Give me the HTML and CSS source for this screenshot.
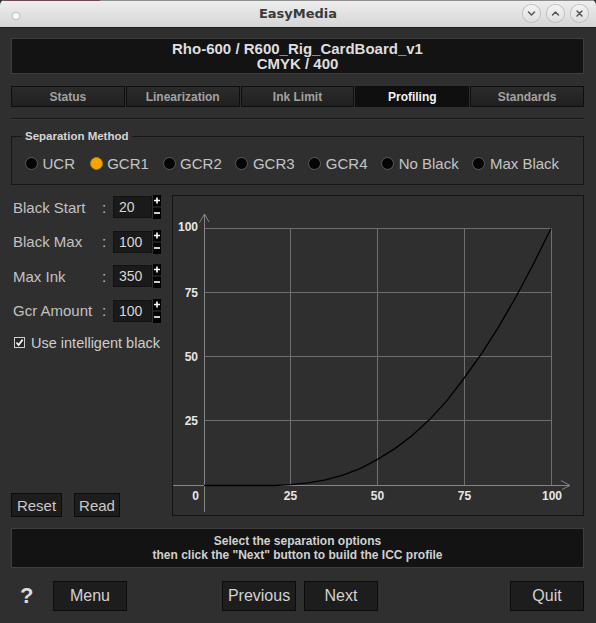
FILE: index.html
```html
<!DOCTYPE html>
<html>
<head>
<meta charset="utf-8">
<title>EasyMedia</title>
<link rel="stylesheet" href="styles.css">
</head>
<body>
<div class="window">
  <div class="titlebar">
    <div class="tb-left"><span class="tb-dot"></span></div>
    <div class="tb-title">EasyMedia</div>
    <div class="tb-buttons">
      <span class="tb-btn"><svg width="17" height="17" viewBox="0 0 17 17"><path d="M5.5 7 L8.5 10 L11.5 7" fill="none" stroke="#555" stroke-width="1.5" stroke-linecap="round" stroke-linejoin="round"/></svg></span>
      <span class="tb-btn"><svg width="17" height="17" viewBox="0 0 17 17"><path d="M5.5 10 L8.5 7 L11.5 10" fill="none" stroke="#555" stroke-width="1.5" stroke-linecap="round" stroke-linejoin="round"/></svg></span>
      <span class="tb-btn"><svg width="17" height="17" viewBox="0 0 17 17"><path d="M6 6 L11 11 M11 6 L6 11" fill="none" stroke="#555" stroke-width="1.5" stroke-linecap="round"/></svg></span>
    </div>
  </div>

  <div class="content">
    <div class="header">
      <div>Rho-600 / R600_Rig_CardBoard_v1</div>
      <div>CMYK / 400</div>
    </div>

    <div class="tabs">
      <div class="tab">Status</div>
      <div class="tab">Linearization</div>
      <div class="tab">Ink Limit</div>
      <div class="tab active">Profiling</div>
      <div class="tab">Standards</div>
    </div>

    <div class="rule"></div>

    <fieldset class="group">
      <legend>Separation Method</legend>
      <div class="radios">
        <div class="radio first"><span class="dot"></span>UCR</div>
        <div class="radio"><span class="dot on"></span>GCR1</div>
        <div class="radio"><span class="dot"></span>GCR2</div>
        <div class="radio"><span class="dot"></span>GCR3</div>
        <div class="radio"><span class="dot"></span>GCR4</div>
        <div class="radio"><span class="dot"></span>No Black</div>
        <div class="radio"><span class="dot"></span>Max Black</div>
      </div>
    </fieldset>

    <div class="work">
      <div class="params">
        <div class="field">
          <span class="label">Black Start</span><span class="colon">:</span>
          <span class="input">20</span>
          <svg class="spin" width="8" height="24" viewBox="0 0 8 24"><rect width="8" height="24" fill="#000"/><rect y="11.5" width="8" height="1" fill="#3a3a3a"/><path d="M1 5.5 H7 M4 2.5 V8.5" stroke="#fff" stroke-width="1.6"/><path d="M1 18 H7" stroke="#fff" stroke-width="1.6"/></svg>
        </div>
        <div class="field">
          <span class="label">Black Max</span><span class="colon">:</span>
          <span class="input">100</span>
          <svg class="spin" width="8" height="24" viewBox="0 0 8 24"><rect width="8" height="24" fill="#000"/><rect y="11.5" width="8" height="1" fill="#3a3a3a"/><path d="M1 5.5 H7 M4 2.5 V8.5" stroke="#fff" stroke-width="1.6"/><path d="M1 18 H7" stroke="#fff" stroke-width="1.6"/></svg>
        </div>
        <div class="field">
          <span class="label">Max Ink</span><span class="colon">:</span>
          <span class="input">350</span>
          <svg class="spin" width="8" height="24" viewBox="0 0 8 24"><rect width="8" height="24" fill="#000"/><rect y="11.5" width="8" height="1" fill="#3a3a3a"/><path d="M1 5.5 H7 M4 2.5 V8.5" stroke="#fff" stroke-width="1.6"/><path d="M1 18 H7" stroke="#fff" stroke-width="1.6"/></svg>
        </div>
        <div class="field">
          <span class="label">Gcr Amount</span><span class="colon">:</span>
          <span class="input">100</span>
          <svg class="spin" width="8" height="24" viewBox="0 0 8 24"><rect width="8" height="24" fill="#000"/><rect y="11.5" width="8" height="1" fill="#3a3a3a"/><path d="M1 5.5 H7 M4 2.5 V8.5" stroke="#fff" stroke-width="1.6"/><path d="M1 18 H7" stroke="#fff" stroke-width="1.6"/></svg>
        </div>
        <div class="check">
          <svg class="box" width="11" height="11" viewBox="0 0 11 11"><rect x="0.5" y="0.5" width="10" height="10" fill="#262626" stroke="#cfcfcf"/><path d="M2.5 5.5 L4.6 8 L8.6 2.6" fill="none" stroke="#f0f0f0" stroke-width="1.8"/></svg>
          <span>Use intelligent black</span>
        </div>
        <div class="actions">
          <button class="btn reset">Reset</button>
          <button class="btn read">Read</button>
        </div>
      </div>

      <div class="chart">
        <svg width="410" height="319" viewBox="173 197 410 319">
          <g stroke="#6f6f6f" stroke-width="1" shape-rendering="crispEdges" fill="none">
            <path d="M204 229.5 H551.5 M204 293.5 H551.5 M204 357.5 H551.5 M204 421.5 H551.5"/>
            <path d="M290.5 229 V486 M377.5 229 V486 M464.5 229 V486 M551.5 229 V486"/>
          </g>
          <g stroke="#858585" stroke-width="1" fill="none">
            <path d="M204.5 216 V513" shape-rendering="crispEdges"/>
            <path d="M173 486.5 H569" shape-rendering="crispEdges"/>
            <path d="M199.5 223.5 L204.5 215 L209 223"/>
            <path d="M561 481.5 L570 486.5 L562 490.5"/>
          </g>
          <polyline fill="none" stroke="#000" stroke-width="1.3" points="204,486.5 273.4,486.5 290.75,485.6 308.1,483.9 325.45,480.9 342.8,476.2 360.15,469.6 377.5,460.4 394.85,449.6 412.2,436.4 429.55,420.6 446.9,401.6 464.25,379 481.6,354.6 498.95,327.4 516.3,297.2 533.65,264.5 551,229.5"/>
          <g class="axis-label" text-anchor="end">
            <text x="198" y="232">100</text>
            <text x="198" y="297.5">75</text>
            <text x="198" y="361.5">50</text>
            <text x="198" y="426">25</text>
          </g>
          <g class="axis-label" text-anchor="middle">
            <text x="195.5" y="501">0</text>
            <text x="290.5" y="501">25</text>
            <text x="377.5" y="501">50</text>
            <text x="464.5" y="501">75</text>
            <text x="552" y="501">100</text>
          </g>
        </svg>
      </div>
    </div>

    <div class="message">
      <div>Select the separation options</div>
      <div>then click the "Next" button to build the ICC profile</div>
    </div>

    <div class="footer">
      <span class="help">?</span>
      <button class="btn big menu">Menu</button>
      <button class="btn big prev">Previous</button>
      <button class="btn big next">Next</button>
      <button class="btn big quit">Quit</button>
    </div>
  </div>
</div>
</body>
</html>
```

FILE: styles.css
```css
* { box-sizing: border-box; }
html, body { margin: 0; padding: 0; }
body {
  width: 596px;
  height: 623px;
  overflow: hidden;
  background: #2f2f2f;
  font-family: "Liberation Sans", Arial, sans-serif;
  color: #c8c8c8;
}
.window {
  width: 596px;
  height: 623px;
  display: flex;
  flex-direction: column;
  background: #2f2f2f;
}

/* title bar */
.titlebar {
  flex: none;
  height: 28px;
  display: grid;
  grid-template-columns: 1fr auto 1fr;
  align-items: center;
  background:
    linear-gradient(90deg, #6a4658 0 100px, #8e8e8e 100px) top / 100% 1px no-repeat,
    linear-gradient(#efefef, #d5d5d5);
  border-bottom: 1px solid #1c1c1c;
  border-radius: 5px 5px 0 0;
}
.tb-left { display: flex; align-items: center; }
.tb-dot {
  width: 6px;
  height: 6px;
  margin: 4px 0 0 13px;
  border-radius: 50%;
  background: #f8f8f8;
  box-shadow: 0 0 1px 1px #c4c4c4;
}
.tb-title {
  font-family: "DejaVu Sans", sans-serif;
  font-weight: bold;
  font-size: 13px;
  color: #3a3a3a;
}
.tb-buttons {
  justify-self: end;
  display: flex;
  gap: 7px;
  margin-right: 8px;
}
.tb-btn {
  width: 17px;
  height: 17px;
  border-radius: 50%;
  background: linear-gradient(#f4f4f4, #dedede);
  box-shadow: 0 0 0 1px #bdbdbd;
  display: block;
}
.tb-btn svg { display: block; }

/* content */
.content {
  flex: 1;
  display: flex;
  flex-direction: column;
  padding: 0 12px 0 11px;
}
.header {
  margin-top: 10px;
  height: 36px;
  background: #131313;
  border: 1px solid #3e3e3e;
  display: flex;
  flex-direction: column;
  align-items: center;
  justify-content: center;
  font-weight: bold;
  font-size: 15px;
  line-height: 15.5px;
  color: #dedede;
}

.tabs {
  margin-top: 12px;
  height: 21px;
  display: grid;
  grid-template-columns: repeat(5, 1fr);
  gap: 1px;
}
.tab {
  background: linear-gradient(#2b2b2b, #202020);
  border: 1px solid #0e0e0e;
  display: flex;
  align-items: center;
  justify-content: center;
  font-weight: bold;
  font-size: 12px;
  color: #a2a2a2;
}
.tab.active {
  background: #0f0f0f;
  color: #f2f2f2;
}

.rule {
  margin-top: 11px;
  height: 2px;
  border-top: 1px solid #161616;
  border-bottom: 1px solid #363636;
}

.group {
  margin: 10px 0 0;
  padding: 12px 0 12px 13px;
  border: 1px solid #171717;
  min-width: 0;
}
.group legend {
  margin-left: -3px;
  padding: 0 3px;
  font-weight: bold;
  font-size: 11.5px;
  line-height: 13px;
  color: #d4d4d4;
}
.radios {
  display: flex;
  align-items: center;
  height: 17px;
  gap: 13.7px;
}
.radio {
  display: flex;
  align-items: center;
  gap: 4.5px;
  font-size: 15px;
  color: #c4c4c4;
  white-space: nowrap;
}
.radio.first { margin-right: 1px; }
.dot {
  width: 13px;
  height: 13px;
  border-radius: 50%;
  background: #050505;
  border: 1px solid #5c5c5c;
}
.dot.on {
  background: #f7a400;
  border-color: #b87c00;
}

/* work area */
.work {
  margin-top: 10px;
  height: 321px;
  display: flex;
}
.params {
  width: 161px;
  display: flex;
  flex-direction: column;
  padding-top: 1px;
}
.field {
  display: flex;
  align-items: center;
  height: 22px;
  margin-bottom: 12.5px;
  font-size: 15px;
  color: #c2c2c2;
}
.label { width: 90px; padding-left: 2px; white-space: nowrap; }
.colon { width: 12px; padding-left: 1px; }
.input {
  width: 39px;
  height: 22px;
  background: #1a1a1a;
  border: 1px solid #121212;
  padding-left: 5px;
  font-size: 14px;
  color: #d6d6d6;
  display: flex;
  align-items: center;
}
.spin { display: block; margin-left: 1px; flex: none; }

.check {
  display: flex;
  align-items: center;
  height: 17px;
  gap: 6px;
  padding-left: 3px;
  font-size: 14.5px;
  color: #cdcdcd;
}
.box { display: block; flex: none; }

.actions {
  margin-top: auto;
  display: flex;
  gap: 12px;
  height: 24px;
  margin-bottom: -1px;
}

.btn {
  font-family: "Liberation Sans", Arial, sans-serif;
  background: #1d1d1d;
  border: 1px solid #0b0b0b;
  color: #c8c8c8;
  font-size: 15px;
  padding: 0;
  display: flex;
  align-items: center;
  justify-content: center;
}
.reset { width: 51px; }
.read { width: 46px; }

.chart {
  width: 412px;
  height: 321px;
  border: 1px solid #141414;
}
.chart svg { display: block; }
.axis-label {
  font-family: "Liberation Sans", Arial, sans-serif;
  font-weight: bold;
  font-size: 12px;
  fill: #e6e6e6;
}

/* message */
.message {
  margin-top: 12px;
  height: 40px;
  background: #131313;
  border: 1px solid #3e3e3e;
  display: flex;
  flex-direction: column;
  justify-content: center;
  align-items: center;
  font-weight: bold;
  font-size: 12px;
  line-height: 14px;
  color: #d0d0d0;
}

/* footer */
.footer {
  margin-top: 13px;
  height: 30px;
  display: flex;
  align-items: center;
}
.help {
  margin-left: 9px;
  width: 12px;
  font-weight: bold;
  font-size: 22px;
  color: #dedede;
}
.btn.big {
  width: 74px;
  height: 30px;
  font-size: 16px;
  color: #d2d2d2;
}
.menu { margin-left: 21px; }
.prev { margin-left: 95px; }
.next { margin-left: 8px; }
.quit { margin-left: auto; }
```
